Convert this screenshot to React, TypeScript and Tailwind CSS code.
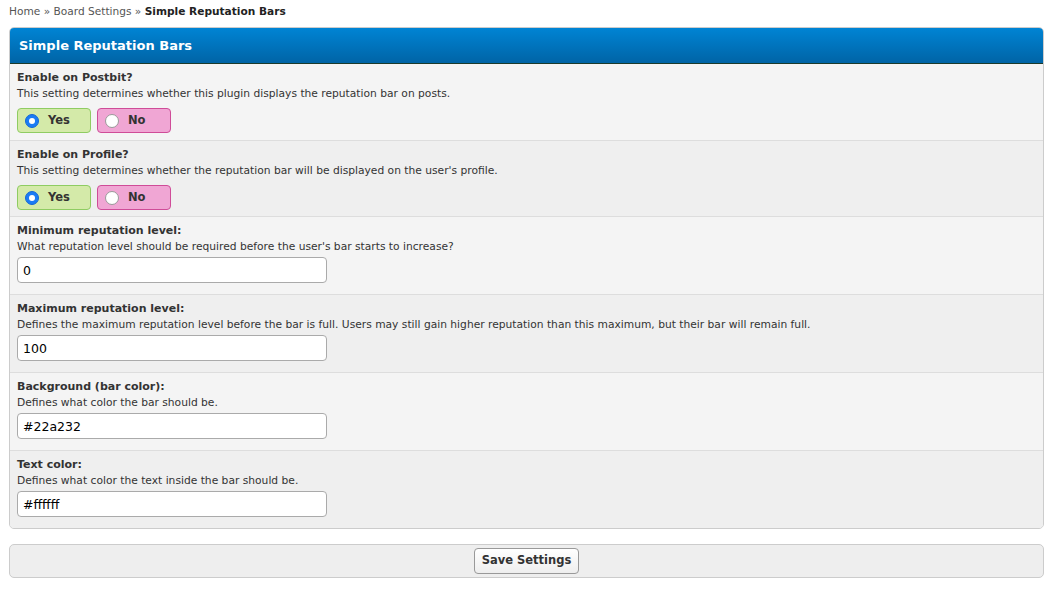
import React from "react";

type Setting =
  | { kind: "yesno"; title: string; desc: string; value: boolean }
  | { kind: "text"; title: string; desc: string; value: string };

const settings: Setting[] = [
  {
    kind: "yesno",
    title: "Enable on Postbit?",
    desc: "This setting determines whether this plugin displays the reputation bar on posts.",
    value: true,
  },
  {
    kind: "yesno",
    title: "Enable on Profile?",
    desc: "This setting determines whether the reputation bar will be displayed on the user's profile.",
    value: true,
  },
  {
    kind: "text",
    title: "Minimum reputation level:",
    desc: "What reputation level should be required before the user's bar starts to increase?",
    value: "0",
  },
  {
    kind: "text",
    title: "Maximum reputation level:",
    desc: "Defines the maximum reputation level before the bar is full. Users may still gain higher reputation than this maximum, but their bar will remain full.",
    value: "100",
  },
  {
    kind: "text",
    title: "Background (bar color):",
    desc: "Defines what color the bar should be.",
    value: "#22a232",
  },
  {
    kind: "text",
    title: "Text color:",
    desc: "Defines what color the text inside the bar should be.",
    value: "#ffffff",
  },
];

const Radio = ({ checked }: { checked: boolean }) =>
  checked ? (
    <span className="w-[14px] h-[14px] rounded-full bg-[#1a7cf5] border border-[#1568d4] flex items-center justify-center">
      <span className="w-[6px] h-[6px] rounded-full bg-white" />
    </span>
  ) : (
    <span className="w-[14px] h-[14px] rounded-full bg-white border border-[#9a9a9a]" />
  );

const YesNo = ({ value }: { value: boolean }) => (
  <div className="flex gap-[6px] mt-[7px]">
    <label className="w-[74px] h-[25px] flex items-center gap-[9px] pl-[7px] rounded-[4px] border border-[#8fcc62] bg-[#d4eaa9] text-[11.5px] font-bold text-[#333]">
      <Radio checked={value} />
      Yes
    </label>
    <label className="w-[74px] h-[25px] flex items-center gap-[9px] pl-[7px] rounded-[4px] border border-[#cf4c98] bg-[#f0a6d4] text-[11.5px] font-bold text-[#333]">
      <Radio checked={!value} />
      No
    </label>
  </div>
);

export default function App() {
  return (
    <div className="min-h-[591px] bg-white font-['DejaVu_Sans',sans-serif] text-[#333]">
      <div className="px-[9px] pt-[4px] h-[27px] text-[10.6px] text-[#555]">
        Home » Board Settings » <span className="font-bold text-[#222]">Simple Reputation Bars</span>
      </div>

      <div className="mx-[9px] mr-[10px] border border-[#ccc] rounded-[5px] overflow-hidden bg-[#f5f5f5]">
        <div className="h-[36px] px-[9px] flex items-center bg-gradient-to-b from-[#0084d4] to-[#0064a6] border-b border-[#1b3a2c] text-white font-bold text-[13px]">
          Simple Reputation Bars
        </div>
        {settings.map((s, i) => (
          <div
            key={i}
            className={`px-[7px] pt-[6px] ${i > 0 ? "border-t border-[#ddd]" : ""} ${
              i % 2 === 0 ? "bg-[#f4f4f4]" : "bg-[#efefef]"
            } ${s.kind === "yesno" ? "h-[76px]" : "h-[78px]"}`}
          >
            <div className="text-[11px] font-bold text-[#333] leading-[16px]">{s.title}</div>
            <div className="text-[10.7px] text-[#333] leading-[15px]">{s.desc}</div>
            {s.kind === "yesno" ? (
              <YesNo value={s.value} />
            ) : (
              <input
                readOnly
                value={s.value}
                className="mt-[3px] w-[310px] h-[26px] px-[5px] rounded-[4px] border border-[#aaa] bg-white text-[12.5px] text-black outline-none"
              />
            )}
          </div>
        ))}
      </div>

      <div className="mx-[9px] mr-[10px] mt-[15px] h-[34px] border border-[#ccc] rounded-[5px] bg-[#eee] flex items-center justify-center">
        <button className="h-[26px] px-[7px] rounded-[4px] border border-[#999] bg-gradient-to-b from-white to-[#eee] text-[11.5px] font-bold text-[#333]">
          Save Settings
        </button>
      </div>
    </div>
  );
}
